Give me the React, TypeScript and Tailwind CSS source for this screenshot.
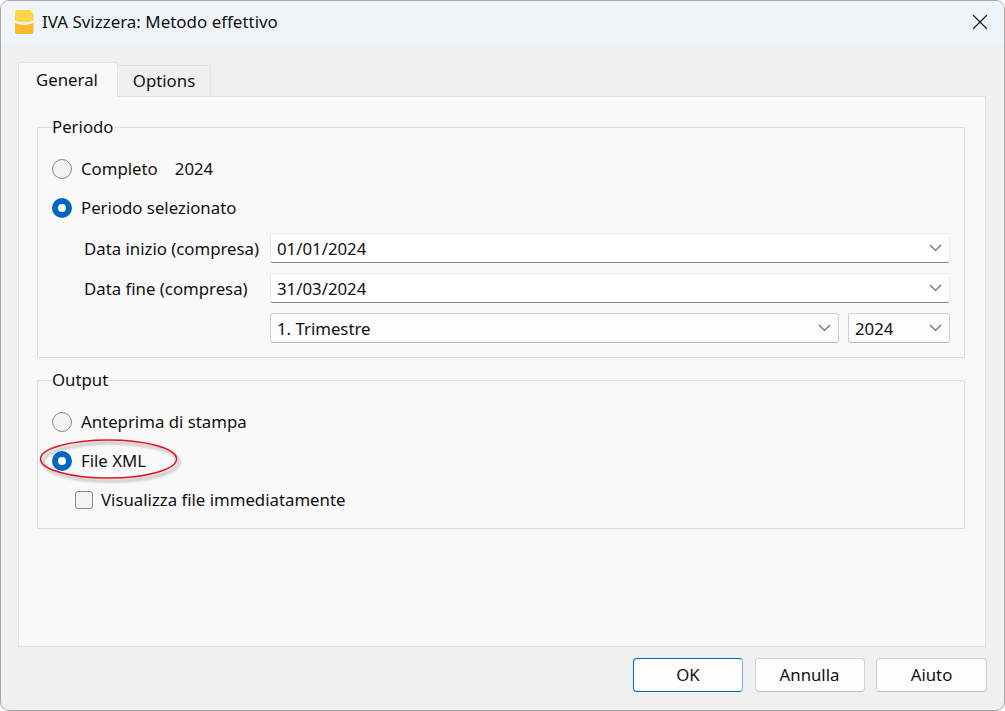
import React from "react";

function Chevron() {
  return (
    <svg className="mr-[7px] shrink-0" width="13" height="8" viewBox="0 0 13 8" fill="none">
      <path d="M1 1l5.500 5.500L12 1" stroke="#6b6b6b" strokeWidth="1.2" />
    </svg>
  );
}

function Radio({ checked }: { checked?: boolean }) {
  if (checked) {
    return (
      <span className="flex h-[20px] w-[20px] shrink-0 items-center justify-center rounded-full bg-[#0067c0]">
        <span className="h-[8px] w-[8px] rounded-full bg-white" />
      </span>
    );
  }
  return <span className="h-[20px] w-[20px] shrink-0 rounded-full border border-[#8a8a8a] bg-[#f3f3f3]" />;
}

function RadioRow({ label, checked, children }: { label: string; checked?: boolean; children?: React.ReactNode }) {
  return (
    <div className="flex h-[24px] items-center gap-[9px] pl-[14px]">
      <Radio checked={checked} />
      <span>{label}</span>
      {children}
    </div>
  );
}

function DateInput({ value }: { value: string }) {
  return (
    <div className="flex h-[30px] flex-1 items-center justify-between rounded-[3px] border border-[#ececec] border-b-[#858585] bg-white pl-[6px]">
      <span className="pt-[1px]">{value}</span>
      <Chevron />
    </div>
  );
}

function Combo({ value, className }: { value: string; className: string }) {
  return (
    <div className={"flex h-[30px] items-center justify-between rounded-[3px] border border-[#d0d0d0] border-b-[#b8b8b8] bg-[#fdfdfd] pl-[6px] " + className}>
      <span className="pt-[1px]">{value}</span>
      <Chevron />
    </div>
  );
}

function Button({ label, primary, width }: { label: string; primary?: boolean; width: string }) {
  return (
    <button
      className={
        (primary
          ? "h-[34px] rounded-[4px] border border-[#0067c0] border-r-[#74b0e4] bg-[#fdfdfd] "
          : "h-[34px] rounded-[4px] border border-[#d4d4d4] border-b-[#c0c0c0] bg-[#fdfdfd] ") + width
      }
    >
      {label}
    </button>
  );
}

export default function App() {
  return (
    <div className="h-[711px] w-[1005px] overflow-hidden bg-white font-['Noto_Sans','Open_Sans',sans-serif] text-[16.8px] leading-[24px] text-[#111111]">
      <div className="flex h-full flex-col overflow-hidden rounded-[9px] border border-[#a6a6a6] bg-[#f0f0f0]">
        <div className="flex h-[43px] shrink-0 items-center justify-between bg-[#eff4f9] pb-[1px] pl-[14px] pr-[16px]">
          <div className="flex items-center gap-[8px]">
            <svg width="19" height="24" viewBox="0 0 19 24">
              <path d="M3 0h12l3.500 4v6.500c-5.500 2.500-12.500 2.500-18.500 0V3a3 3 0 0 1 3-3z" fill="#ffd54a" />
              <path d="M0 13c6 2.500 13 2.500 18.500 0V22a2 2 0 0 1-2 2H2a2 2 0 0 1-2-2z" fill="#fdb92e" />
            </svg>
            <span className="text-[16.950px]">IVA Svizzera: Metodo effettivo</span>
          </div>
          <svg width="16" height="16" viewBox="0 0 16 16" fill="none">
            <path d="M1 1l14 14M15 1L1 15" stroke="#1a1a1a" strokeWidth="1.2" />
          </svg>
        </div>

        <div className="flex h-[52px] shrink-0 items-end pl-[17px] pt-[18px]">
          <div className="z-10 mb-[-1px] flex h-[35px] w-[100px] items-center justify-center rounded-t-[3px] border border-b-0 border-[#e3e3e3] bg-[#f9f9f9] pr-[2px]">
            General
          </div>
          <div className="flex h-[31px] w-[93px] items-center justify-center border border-b-0 border-l-0 border-[#e3e3e3] bg-[#f0f0f0]">
            Options
          </div>
        </div>

        <div className="ml-[17px] mr-[18px] h-[551px] shrink-0 border border-[#e3e3e3] bg-[#f9f9f9] pl-[18px] pr-[20px] pt-[18px]">
          <fieldset className="h-[243px] rounded-[1px] border border-[#dcdcdc]">
            <legend className="ml-[14px]">Periodo</legend>
            <div className="flex flex-col pt-[18px]">
              <RadioRow label="Completo">
                <span className="ml-[8px]">2024</span>
              </RadioRow>
              <div className="mt-[15px]">
                <RadioRow label="Periodo selezionato" checked />
              </div>
              <div className="mt-[13px] flex flex-col gap-[10px] pl-[46px] pr-[14px]">
                <div className="flex items-center">
                  <span className="w-[186px] pt-[1px]">Data inizio (compresa)</span>
                  <DateInput value="01/01/2024" />
                </div>
                <div className="flex items-center">
                  <span className="w-[186px] pt-[1px]">Data fine (compresa)</span>
                  <DateInput value="31/03/2024" />
                </div>
                <div className="flex items-center gap-[9px] pl-[186px]">
                  <Combo value="1. Trimestre" className="flex-1" />
                  <Combo value="2024" className="w-[102px]" />
                </div>
              </div>
            </div>
          </fieldset>

          <fieldset className="mt-[10px] h-[161px] rounded-[1px] border border-[#dcdcdc]">
            <legend className="ml-[14px]">Output</legend>
            <div className="flex flex-col pt-[18px]">
              <RadioRow label="Anteprima di stampa" />
              <div className="relative mt-[15px]">
                <RadioRow label="File XML" checked />
                {/* annotazione rossa */}
                <svg className="absolute left-[0px] top-[-11px]" width="150" height="50" viewBox="0 0 150 50" fill="none">
                  <defs>
                    <filter id="ombra" x="-10%" y="-30%" width="120%" height="160%">
                      <feGaussianBlur stdDeviation="1.5" />
                    </filter>
                  </defs>
                  <ellipse cx="73" cy="24" rx="68" ry="19" stroke="#000" strokeOpacity="0.3" strokeWidth="2" filter="url(#ombra)" />
                  <ellipse cx="70.500" cy="21" rx="68" ry="19" stroke="#e2121c" strokeWidth="1.5" />
                </svg>
              </div>
              <label className="mt-[15px] flex h-[24px] items-center gap-[8px] pl-[37px]">
                <span className="h-[18px] w-[18px] shrink-0 rounded-[3px] border border-[#8a8a8a] bg-[#f3f3f3]" />
                <span>Visualizza file immediatamente</span>
              </label>
            </div>
          </fieldset>
        </div>

        <div className="flex flex-1 justify-end gap-[11.500px] pr-[17px] pt-[11px]">
          <Button label="OK" primary width="w-[110px]" />
          <Button label="Annulla" width="w-[110px]" />
          <Button label="Aiuto" width="w-[111px]" />
        </div>
      </div>
    </div>
  );
}
